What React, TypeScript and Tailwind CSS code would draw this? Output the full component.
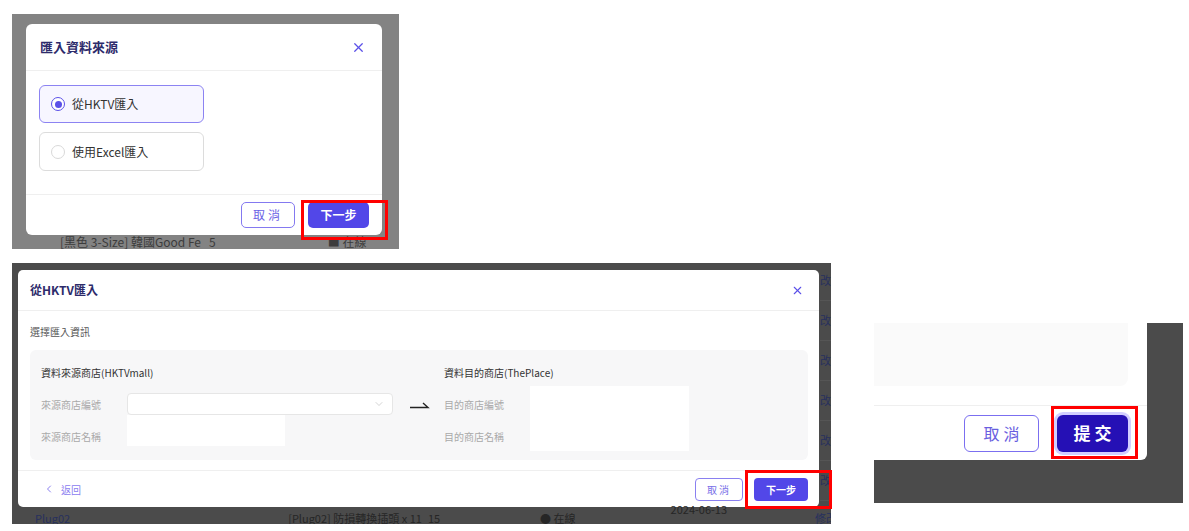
import { X, ChevronDown, ChevronLeft } from "lucide-react";

const RedBox = ({ className }: { className: string }) => (
  <div className={`absolute border-[3px] border-[#ff0000] pointer-events-none ${className}`} />
);

const Radio = ({ checked }: { checked: boolean }) => (
  <span
    className={`w-[14px] h-[14px] rounded-full border flex items-center justify-center bg-white ${
      checked ? "border-[#5b50e8]" : "border-[#d9d9d9]"
    }`}
  >
    {checked && <span className="w-[7px] h-[7px] rounded-full bg-[#5b50e8]" />}
  </span>
);

const SourcePicker = () => (
  <div className="relative w-[387px] h-[235px] bg-[#838383] overflow-hidden">
    <div className="flex flex-col pt-[10px] pl-[14px]">
      <div className="w-[356px] h-[211px] bg-white rounded-[6px] flex flex-col">
        <div className="h-[47px] flex items-center justify-between pl-[14px] pr-[16px] border-b border-[#efefef]">
          <h2 className="text-[13px] font-bold text-[#2d2b6b]">匯入資料來源</h2>
          <X size={15} strokeWidth={2} color="#5b50e8" />
        </div>
        <div className="h-[124px] flex flex-col gap-[9px] pt-[14px] pl-[13px] border-b border-[#efefef]">
          <div className="w-[165px] h-[38px] rounded-[6px] border border-[#8c83f2] bg-[#f7f6ff] flex items-center pl-[11px] gap-[7px]">
            <Radio checked />
            <span className="text-[12px] text-[#333]">從HKTV匯入</span>
          </div>
          <div className="w-[165px] h-[39px] rounded-[6px] border border-[#dcdcdc] flex items-center pl-[11px] gap-[7px]">
            <Radio checked={false} />
            <span className="text-[12px] text-[#333]">使用Excel匯入</span>
          </div>
        </div>
        <div className="flex-1 flex items-center justify-end gap-[13px] pr-[13px]">
          <button className="w-[54px] h-[26px] rounded-[5px] border border-[#8479f0] text-[12px] text-[#6b62e6] tracking-[3px]">
            取消
          </button>
          <button className="w-[61px] h-[26px] rounded-[5px] bg-[#5247e8] text-[12px] font-semibold text-white">
            下一步
          </button>
        </div>
      </div>
      <div className="flex h-[14px] items-center text-[12px] text-[#3c3c3c] leading-none whitespace-nowrap">
        <span className="ml-[34px]">[黑色 3-Size] 韓國Good Fe</span>
        <span className="ml-[8px]">5</span>
        <span className="ml-[112px]">■ 在線</span>
      </div>
    </div>
    <RedBox className="left-[289px] top-[186px] w-[87px] h-[40px]" />
  </div>
);

const FieldLabels = ({ first, second }: { first: string; second: string }) => (
  <div className="w-[86px] flex flex-col text-[10px] text-[#a9a9a9]">
    <span className="h-[22px] flex items-center">{first}</span>
    <span className="h-[14px] mt-[14px] flex items-center">{second}</span>
  </div>
);

const HktvImport = () => (
  <div className="relative w-[819px] h-[261px]">
    <div className="w-full h-full bg-[#4b4b4b] overflow-hidden flex flex-col">
      <div className="flex h-[244px]">
        <div className="w-[6px]" />
        <div className="mt-[7px] w-[801px] h-[237px] bg-white rounded-[5px] flex flex-col">
          <div className="h-[41px] flex items-center justify-between pl-[12px] pr-[15px] border-b border-[#efefef]">
            <h2 className="text-[12px] font-bold text-[#2d2b6b]">從HKTV匯入</h2>
            <X size={13} strokeWidth={2} color="#5b50e8" />
          </div>
          <div className="h-[160px] px-[12px] pt-[13px] flex flex-col border-b border-[#efefef]">
            <p className="h-[14px] flex items-center text-[10px] text-[#555]">選擇匯入資訊</p>
            <div className="mt-[12px] h-[110px] mr-[-1px] rounded-[6px] bg-[#f7f7f8] flex pl-[11px] pt-[15px]">
              <div className="w-[359px] flex flex-col">
                <h3 className="h-[14px] flex items-center text-[10px] text-[#333]">資料來源商店(HKTVmall)</h3>
                <div className="mt-[14px] flex">
                  <FieldLabels first="來源商店編號" second="來源商店名稱" />
                  <div className="flex flex-col">
                    <div className="w-[266px] h-[22px] bg-white border border-[#e6e6e6] rounded-[4px] flex items-center justify-end pr-[7px]">
                      <ChevronDown size={12} strokeWidth={1.3} color="#bdbdbd" />
                    </div>
                    <div className="w-[158px] h-[31px] bg-white" />
                  </div>
                </div>
              </div>
              <div className="w-[44px] pt-[35px]">
                <svg width="20" height="10" viewBox="0 0 20 10" className="ml-[10px]">
                  <path d="M0 7.5 H18 L13 3" fill="none" stroke="#222" strokeWidth="1.4" />
                </svg>
              </div>
              <div className="flex flex-col">
                <h3 className="h-[14px] flex items-center text-[10px] text-[#333]">資料目的商店(ThePlace)</h3>
                <div className="mt-[14px] flex">
                  <FieldLabels first="目的商店編號" second="目的商店名稱" />
                  <div className="w-[159px] h-[65px] -mt-[7px] bg-white" />
                </div>
              </div>
            </div>
          </div>
          <div className="flex-1 flex items-center justify-between pl-[25px] pr-[11px]">
            <div className="flex items-center gap-[6px] text-[#8b80f0]">
              <ChevronLeft size={12} strokeWidth={2} color="#8b80f0" />
              <span className="text-[10px]">返回</span>
            </div>
            <div className="flex items-center gap-[11px]">
              <button className="w-[48px] h-[23px] rounded-[4px] border border-[#8a80f0] text-[10px] text-[#7a70e8] tracking-[2px]">
                取消
              </button>
              <button className="w-[54px] h-[23px] rounded-[4px] bg-[#5247e8] text-[10px] font-semibold text-white">
                下一步
              </button>
            </div>
          </div>
        </div>
        <div className="w-[12px] flex flex-col -mt-[2px] pl-[1px] text-[11px] text-[#27305e]">
          {[0, 1, 2, 3, 4, 5].map((i) => (
            <span key={i} className="h-[40px] flex items-center border-b border-[#555]">
              改
            </span>
          ))}
        </div>
      </div>
      <div className="h-[17px] flex items-end text-[11px] leading-none text-[#262626] whitespace-nowrap">
        <span className="ml-[23px] text-[#27305e]">Plug02</span>
        <span className="ml-[218px]">[Plug02] 防損轉換插頭 x 11</span>
        <span className="ml-[6px]">15</span>
        <span className="ml-[100px]">● 在線</span>
        <span className="ml-[95px] self-start -mt-[3px]">2024-06-13</span>
        <span className="ml-[88px] text-[#27305e]">修改</span>
      </div>
    </div>
    <RedBox className="left-[733px] top-[207px] w-[87px] h-[39px]" />
  </div>
);

const SubmitFooter = () => (
  <div className="relative w-[309px] h-[180px] bg-[#4b4b4b]">
    <div className="w-[273px] h-[137px] bg-white rounded-br-[6px] flex flex-col">
      <div className="w-[254px] h-[63px] bg-[#fafafa] rounded-br-[8px]" />
      <div className="mt-[19px] flex-1 border-t border-[#efefef] flex items-center justify-end gap-[18px] pr-[19px]">
        <button className="w-[75px] h-[37px] rounded-[6px] border-[1.5px] border-[#7b6ff0] text-[16px] text-[#6a5fe0] tracking-[4px] pl-[4px]">
          取消
        </button>
        <button className="w-[71px] h-[37px] rounded-[6px] bg-[#2510b5] ring-[3px] ring-[#d2ceff] text-[17px] font-bold text-white tracking-[4px] pl-[4px]">
          提交
        </button>
      </div>
    </div>
    <RedBox className="left-[177px] top-[83px] w-[87px] h-[53px]" />
  </div>
);

export default function App() {
  return (
    <div className="w-[1189px] h-[531px] bg-white overflow-hidden font-['Noto_Sans_CJK_TC','Noto_Sans',sans-serif]">
      <div className="pt-[14px] pl-[12px]">
        <SourcePicker />
      </div>
      <div className="flex items-start pl-[12px] mt-[14px]">
        <HktvImport />
        <div className="ml-[43px] mt-[60px]">
          <SubmitFooter />
        </div>
      </div>
    </div>
  );
}
